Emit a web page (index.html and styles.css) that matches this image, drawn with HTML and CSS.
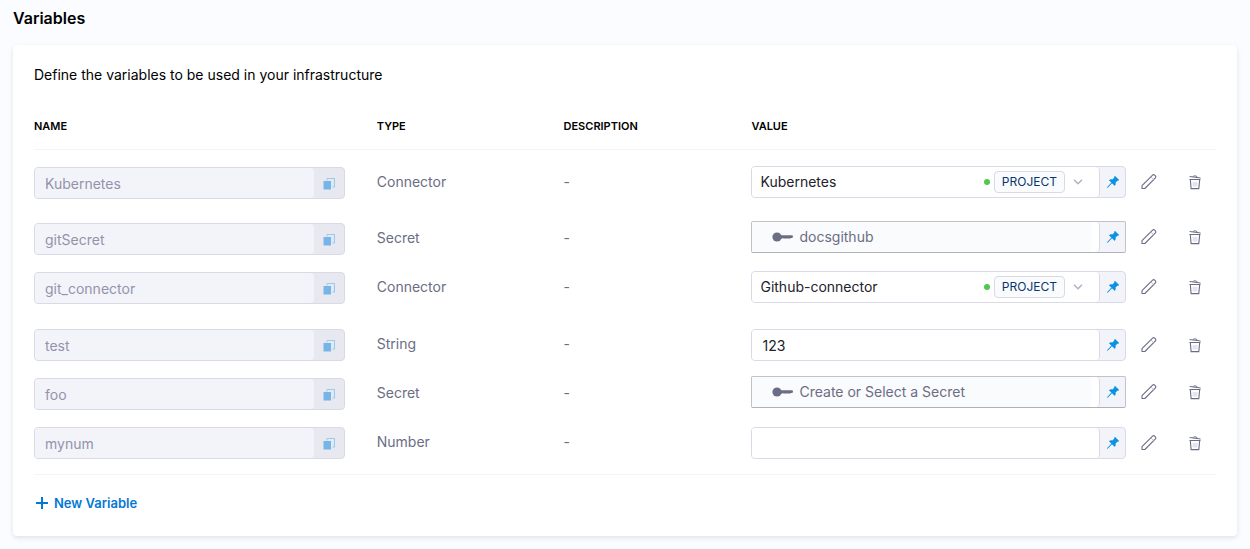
FILE: index.html
```html
<!DOCTYPE html>
<html lang="en">
<head>
<meta charset="utf-8">
<title>Variables</title>
<link rel="stylesheet" href="styles.css">
</head>
<body>
<svg class="sprite" aria-hidden="true">
  <symbol id="copy" viewBox="0 0 12 12"><path d="M4 .5h7.500v8.500H9.500" fill="none" stroke="#9ccbf0" stroke-width="1.200"/><path d="M4 2.500V.5" stroke="#9ccbf0"/><path d="M.5 3h7.500v8.500H.5z" fill="#76b5e8"/></symbol>
  <symbol id="pin" viewBox="0 0 12 12"><path d="M8 .2 11.800 4l-.7.6-.8-.1-2 2c.3 1.200.1 2.200-.6 3L5 6.900.6 11.600l-.3-.3L4.700 6.700 2.300 4.300c.8-.7 1.900-.9 3.100-.6l2.100-2-.1-.8z" fill="#0b92e6" stroke="#0b92e6" stroke-width=".6"/></symbol>
  <symbol id="pencil" viewBox="0 0 18 18"><path d="M2 12.700 12.600 2.100a1.500 1.500 0 0 1 2.100 0l.7.7a1.500 1.500 0 0 1 0 2.100L4.900 15.500H2z" fill="#fff" stroke="#6b6d85" stroke-width="1.100" stroke-linejoin="round"/><path d="m11 4 2.600 2.600" stroke="#b5b6c6" stroke-width=".8"/></symbol>
  <symbol id="trash" viewBox="0 0 16 16"><path d="M2.500 5.500h11M3.300 5.500l.8 9.100h7.700l.9-9.100" fill="none" stroke="#6b6d85" stroke-width="1.100"/><path d="M2.600 2.500 13.600 4M6 2.800c.2-1.400 3.800-1.400 4.500.7" fill="none" stroke="#6b6d85"/><path d="M5.500 8h5v4.500h-5z" fill="#e4e5ec"/></symbol>
  <symbol id="key" viewBox="0 0 21 10"><circle cx="5" cy="5" r="4.600" fill="#6b6d85"/><path d="M8 3.200h12.200q.8.200.8 1.400t-1 1.400h-1l-1 .7-1-.5-1 .6-1-.6-1 .6-1-.6-1 .5-1-.6-1 .6H8z" fill="#6b6d85"/></symbol>
  <symbol id="chevron" viewBox="0 0 10 6"><path d="m1 .8 4 4 4-4" fill="none" stroke="#b0b1c4" stroke-width="1.500"/></symbol>
  <symbol id="plus" viewBox="0 0 12 12"><path d="M6 0v12M0 6h12" stroke="#0278d5" stroke-width="2"/></symbol>
</svg>
<main class="page">
  <h1 class="title">Variables</h1>
  <section class="card">
    <p class="intro">Define the variables to be used in your infrastructure</p>
    <table class="variables">
      <colgroup><col class="col-name"><col class="col-type"><col class="col-desc"><col><col class="col-edit"><col class="col-delete"></colgroup>
      <thead>
        <tr><th scope="col">NAME</th><th scope="col">TYPE</th><th scope="col">DESCRIPTION</th><th scope="col">VALUE</th><td></td><td></td></tr>
      </thead>
      <tbody>
        <tr class="row-connector">
          <td class="name"><div class="name-box"><input aria-label="Name" value="Kubernetes" disabled><button class="copy" aria-label="Copy name"><svg><use href="#copy"/></svg></button></div></td>
          <td class="text">Connector</td><td class="text">-</td>
          <td class="value"><div class="field"><button class="connector"><span class="connector-name">Kubernetes</span><i class="status"></i><span class="scope">PROJECT</span><svg class="chevron"><use href="#chevron"/></svg></button><button class="pin" aria-label="Value type"><svg><use href="#pin"/></svg></button></div></td>
          <td class="action"><button aria-label="Edit"><svg class="pencil"><use href="#pencil"/></svg></button></td><td class="action"><button aria-label="Delete"><svg class="trash"><use href="#trash"/></svg></button></td>
        </tr>
        <tr class="row-secret">
          <td class="name"><div class="name-box"><input aria-label="Name" value="gitSecret" disabled><button class="copy" aria-label="Copy name"><svg><use href="#copy"/></svg></button></div></td>
          <td class="text">Secret</td><td class="text">-</td>
          <td class="value"><div class="field field-secret"><button class="secret"><svg class="key"><use href="#key"/></svg>docsgithub</button><button class="pin" aria-label="Value type"><svg><use href="#pin"/></svg></button></div></td>
          <td class="action"><button aria-label="Edit"><svg class="pencil"><use href="#pencil"/></svg></button></td><td class="action"><button aria-label="Delete"><svg class="trash"><use href="#trash"/></svg></button></td>
        </tr>
        <tr class="row-connector">
          <td class="name"><div class="name-box"><input aria-label="Name" value="git_connector" disabled><button class="copy" aria-label="Copy name"><svg><use href="#copy"/></svg></button></div></td>
          <td class="text">Connector</td><td class="text">-</td>
          <td class="value"><div class="field"><button class="connector"><span class="connector-name">Github-connector</span><i class="status"></i><span class="scope">PROJECT</span><svg class="chevron"><use href="#chevron"/></svg></button><button class="pin" aria-label="Value type"><svg><use href="#pin"/></svg></button></div></td>
          <td class="action"><button aria-label="Edit"><svg class="pencil"><use href="#pencil"/></svg></button></td><td class="action"><button aria-label="Delete"><svg class="trash"><use href="#trash"/></svg></button></td>
        </tr>
        <tr class="row-input">
          <td class="name"><div class="name-box"><input aria-label="Name" value="test" disabled><button class="copy" aria-label="Copy name"><svg><use href="#copy"/></svg></button></div></td>
          <td class="text">String</td><td class="text">-</td>
          <td class="value"><div class="field"><input class="plain" aria-label="Value of test" value="123"><button class="pin" aria-label="Value type"><svg><use href="#pin"/></svg></button></div></td>
          <td class="action"><button aria-label="Edit"><svg class="pencil"><use href="#pencil"/></svg></button></td><td class="action"><button aria-label="Delete"><svg class="trash"><use href="#trash"/></svg></button></td>
        </tr>
        <tr class="row-secret">
          <td class="name"><div class="name-box"><input aria-label="Name" value="foo" disabled><button class="copy" aria-label="Copy name"><svg><use href="#copy"/></svg></button></div></td>
          <td class="text">Secret</td><td class="text">-</td>
          <td class="value"><div class="field field-secret"><button class="secret"><svg class="key"><use href="#key"/></svg>Create or Select a Secret</button><button class="pin" aria-label="Value type"><svg><use href="#pin"/></svg></button></div></td>
          <td class="action"><button aria-label="Edit"><svg class="pencil"><use href="#pencil"/></svg></button></td><td class="action"><button aria-label="Delete"><svg class="trash"><use href="#trash"/></svg></button></td>
        </tr>
        <tr class="row-input">
          <td class="name"><div class="name-box"><input aria-label="Name" value="mynum" disabled><button class="copy" aria-label="Copy name"><svg><use href="#copy"/></svg></button></div></td>
          <td class="text">Number</td><td class="text">-</td>
          <td class="value"><div class="field"><input class="plain" aria-label="Value of mynum"><button class="pin" aria-label="Value type"><svg><use href="#pin"/></svg></button></div></td>
          <td class="action"><button aria-label="Edit"><svg class="pencil"><use href="#pencil"/></svg></button></td><td class="action"><button aria-label="Delete"><svg class="trash"><use href="#trash"/></svg></button></td>
        </tr>
      </tbody>
    </table>
    <button class="add"><svg><use href="#plus"/></svg>New Variable</button>
  </section>
</main>
</body>
</html>
```
FILE: styles.css
```css
* { box-sizing: border-box; }
body { margin: 0; background: #fafcff; color: #000; font: 14px/20px Inter, "Liberation Sans", sans-serif; }
button, input { margin: 0; padding: 0; border: 0; background: none; color: inherit; font: inherit; }
button { display: flex; align-items: center; cursor: pointer; }
svg { display: block; flex: none; }
.sprite { position: absolute; width: 0; height: 0; }
.page { padding: 8px 13px 13px; }
.title { margin: 0 0 17px; font-size: 16px; line-height: 20px; font-weight: 600; }
.card { padding: 20px 21px; border-radius: 4px; background: #fff; box-shadow: 0 0 1px rgba(40, 41, 61, .04), 0 2px 4px rgba(96, 97, 112, .16); }
.intro { margin: 0; }
.variables { width: 100%; margin-top: 28px; border-collapse: collapse; table-layout: fixed; }
.col-name { width: 29%; }
.col-type { width: 15.8%; }
.col-desc { width: 15.9%; }
.col-edit { width: 46px; }
.col-delete { width: 44px; }
td, th { padding: 0; text-align: left; vertical-align: top; }
th { height: 36px; padding-top: 3px; font-size: 11px; line-height: 20px; font-weight: 600; }
tbody { border-top: 1px solid #f3f3fa; border-bottom: 1px solid #f3f3fa; }
.row-connector { height: 57px; }
.row-secret { height: 49px; }
.row-input { height: 49px; }
.row-input:last-child { height: 64px; }
.name { padding: 17px 32px 0 0; }
.text { padding-top: 22px; color: #6b6d85; }
.value, .action { padding-top: 16px; }
.row-secret .value, .row-secret .action { padding-top: 15px; }
.row-input .value, .row-input .action { padding-top: 17px; }
.name-box { display: flex; height: 32px; border: 1px solid #d9dae6; border-radius: 4px; background: #e8e8f1; overflow: hidden; }
.name-box input { flex: 1; min-width: 0; padding: 2px 10px 0; border-radius: 0 4px 4px 0; background: #f3f3fa; color: #9293ab; }
.copy { width: 30px; padding-top: 2px; justify-content: center; }
.copy svg { width: 12px; height: 12px; }
.field { display: flex; height: 32px; border: 1px solid #d9dae6; border-radius: 4px; background: #f3f3fa; overflow: hidden; }
.field-secret { border-color: #c2c3c8 #c2c3c8 #b0b1b8; border-radius: 2px; }
.connector, .plain, .secret { flex: 1; min-width: 0; border-right: 1px solid #d9dae6; border-radius: 0 4px 4px 0; background: #fff; color: #22222a; text-align: left; }
.connector { padding: 0 16px 0 8px; }
.connector-name { flex: 1; }
.status { width: 6px; height: 6px; margin-right: 4px; border-radius: 50%; background: #4dc952; }
.scope { display: flex; align-items: center; height: 22px; padding: 0 7px; border: 1px solid #d9dae6; border-radius: 4px; background: #fafbfc; color: #07356f; font-size: 12px; line-height: 20px; }
.chevron { width: 10px; height: 6px; margin-left: 8px; }
.plain { padding: 2px 10px 0; }
.secret { gap: 6px; padding-left: 20px; background: linear-gradient(to left, #fff 8px, #fafbfc 8px); color: #6b6d85; }
.key { width: 21px; height: 10px; }
.pin { width: 25px; justify-content: center; }
.pin svg { width: 12px; height: 12px; }
.action button { height: 32px; }
.action .pencil { width: 18px; height: 18px; margin-left: 14px; }
.action .trash { width: 16px; height: 16px; margin-left: 15px; }
.add { gap: 6px; margin: 18px 0 3px 2px; color: #0278d5; font-size: 13px; line-height: 20px; font-weight: 600; }
.add svg { width: 12px; height: 12px; }
```
